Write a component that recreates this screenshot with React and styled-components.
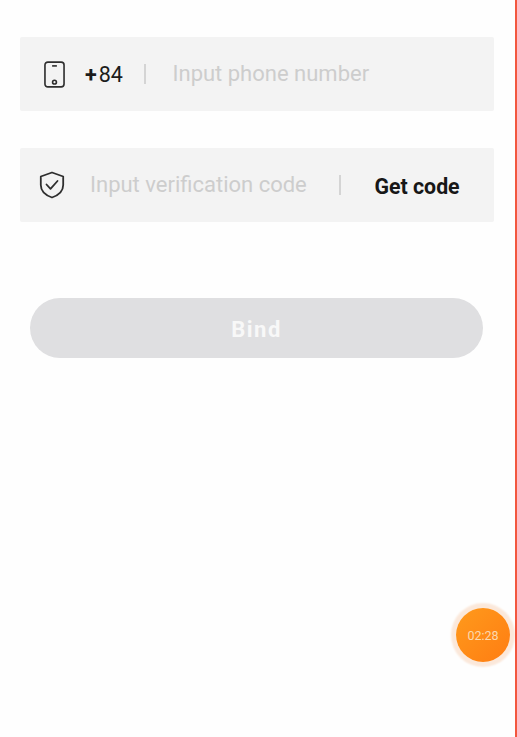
import React from 'react';
import styled, { createGlobalStyle } from 'styled-components';

const GlobalStyle = createGlobalStyle`
	html, body {
		margin: 0;
		padding: 0;
		background: #ffffff;
	}
	* {
		box-sizing: border-box;
	}
`;

const Page = styled.div`
	position: relative;
	width: 517px;
	height: 737px;
	overflow: hidden;
	padding: 37px 21px 0 20px;
	background: #fefefe;
	border-right: 2px solid #f2573f;
	font-family: Roboto, "Liberation Sans", sans-serif;
`;

const Form = styled.div`
	display: flex;
	flex-direction: column;
	gap: 37px;
`;

const Row = styled.div`
	display: flex;
	align-items: center;
	height: 74px;
	padding-left: ${props => props.paddingLeft};
	background: #f3f3f3;
	border-radius: 2px;
`;

const IconSlot = styled.div`
	display: flex;
	flex: none;
	width: ${props => props.width};
	color: #2e2e2e;
`;

const Prefix = styled.span`
	width: 60px;
	font-size: 21.5px;
	color: #1c1c1c;
`;

const Plus = styled.span`
	margin-right: 2px;
	font-weight: 700;
`;

const Divider = styled.span`
	flex: none;
	width: 1.5px;
	height: 20px;
	margin: ${props => props.margin};
	background: #d4d4d4;
`;

const Placeholder = styled.span`
	width: ${props => props.width};
	margin-bottom: 2px;
	font-size: 22px;
	color: #cdcdcd;
	white-space: nowrap;
`;

const GetCode = styled.span`
	margin: 2px 0 0 34px;
	font-size: 21.3px;
	font-weight: 700;
	color: #171717;
	white-space: nowrap;
`;

const BindButton = styled.div`
	display: flex;
	align-items: center;
	justify-content: center;
	width: 453px;
	height: 60px;
	margin: 76px 0 0 10px;
	padding-top: 2px;
	border-radius: 30px;
	background: #dfdfe1;
	font-size: 22px;
	font-weight: 700;
	letter-spacing: 1.5px;
	color: #f8f8f8;
`;

const Timer = styled.div`
	position: absolute;
	left: 456px;
	top: 608px;
	display: flex;
	align-items: center;
	justify-content: center;
	width: 54px;
	height: 54px;
	border-radius: 50%;
	background: linear-gradient(135deg, #ff9a1c, #ff7d12);
	box-shadow: 0 0 2px 5px #fbe8da;
	font-size: 12.5px;
	color: #fbd9ae;
`;

const PhoneIcon = () => (
	<svg width="21" height="27" viewBox="0 0 22 28" fill="none" stroke="currentColor" strokeWidth="1.7">
		<rect x="1" y="1" width="20" height="26" rx="3" />
		<path d="M8.5 5h5" />
		<circle cx="11" cy="22" r="2" />
	</svg>
);

const ShieldIcon = () => (
	<svg width="26" height="28" viewBox="0 0 26 28" fill="none" stroke="currentColor" strokeWidth="1.8" strokeLinejoin="round" strokeLinecap="round">
		<path d="M13 1.5 24.2 5.5V14c0 6-4.6 10.2-11.2 12.5C6.400 24.200 1.800 20 1.800 14V5.500Z" />
		<path d="M7.500 13.500 11.500 17.800 18.500 10" />
	</svg>
);

const App = () => (
	<Page>
		<GlobalStyle />
		<Form>
			<Row paddingLeft="24px">
				<IconSlot width="41px"><PhoneIcon /></IconSlot>
				<Prefix><Plus>+</Plus>84</Prefix>
				<Divider margin="0 27px 0 -1px" />
				<Placeholder>Input phone number</Placeholder>
			</Row>
			<Row paddingLeft="19px">
				<IconSlot width="51px"><ShieldIcon /></IconSlot>
				<Placeholder width="249px">Input verification code</Placeholder>
				<Divider />
				<GetCode>Get code</GetCode>
			</Row>
		</Form>
		<BindButton>Bind</BindButton>
		<Timer>02:28</Timer>
	</Page>
);

export default App;
